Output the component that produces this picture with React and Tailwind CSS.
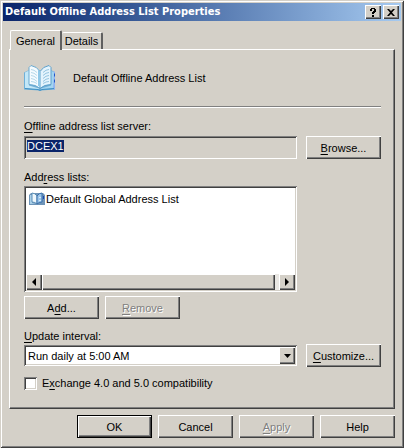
import React, { useEffect, useRef, useState } from 'react';
import clsx from 'clsx';

const RAISED =
  'bg-[#d4d0c8] shadow-[inset_1px_1px_#ffffff,inset_-1px_-1px_#404040,inset_-2px_-2px_#808080]';
const SUNKEN =
  'shadow-[inset_1px_1px_#808080,inset_-1px_-1px_#ffffff,inset_2px_2px_#404040,inset_-2px_-2px_#d4d0c8]';

function Key({ children }) {
  return <span className="underline underline-offset-2">{children}</span>;
}

function PushButton({ children, isDefault, disabled, onClick }) {
  return (
    <button
      type="button"
      disabled={disabled}
      onClick={onClick}
      className={clsx(
        'h-[23px] w-[75px] shrink-0 text-center',
        isDefault
          ? 'bg-[#d4d0c8] shadow-[inset_0_0_0_1px_#000000,inset_2px_2px_#ffffff,inset_-2px_-2px_#404040,inset_-3px_-3px_#808080]'
          : RAISED,
        disabled && 'text-[#808080] [text-shadow:1px_1px_#ffffff]'
      )}
    >
      {children}
    </button>
  );
}

function BookIcon({ className }) {
  return (
    <svg viewBox="0 0 32 27" className={className} aria-hidden="true">
      <path d="M0 8 L4 6 L28 6 L31 8 V25 L17 26 H15 L0 25 Z" fill="#6fb0d8" />
      <path d="M29 7 H31 V25 H28 Z" fill="#8fb4f2" />
      <path d="M30 9 h1 v3 h-1 z M30 15 h1 v3 h-1 z" fill="#2456c8" />
      <path d="M1 8 L5 6 V21 L15 24 V25 L1 24 Z" fill="#c3e7f7" />
      <path d="M30 8 L27 6 V21 L17 24 V25 L29 24 Z" fill="#a3d5f0" />
      <path d="M5 3 L7 1 Q13 2 16 7 V24 Q12 20 5 20 Z" fill="#f4fbff" stroke="#6aa9cf" />
      <path d="M27 3 L25 1 Q19 2 16 7 V24 Q20 20 27 20 Z" fill="#e4f4fd" stroke="#5d9fca" />
      <path d="M14 5 L16 7 V23 L14 21 Z" fill="#8fc8e8" />
      <path
        d="M7 5 Q10 5 13 8 M7 8 Q10 8 13 11 M7 11 Q10 11 13 14 M7 14 Q10 14 13 17 M7 17 Q10 17 13 19"
        fill="none"
        stroke="#b4d8ea"
      />
      <path
        d="M25 5 Q22 5 19 8 M25 8 Q22 8 19 11 M25 11 Q22 11 19 14 M25 14 Q22 14 19 17 M25 17 Q22 17 19 19"
        fill="none"
        stroke="#95c4e0"
      />
      <path d="M1 24 L14 25 L16 26 L18 25 L30 24" fill="none" stroke="#3d8fc4" />
    </svg>
  );
}

function SmallBookIcon() {
  return (
    <svg viewBox="0 0 16 14" className="h-[14px] w-4 shrink-0" aria-hidden="true">
      <path d="M0 3 L2 1 H14 L16 3 V13 H0 Z" fill="#6e94b8" />
      <path d="M1 3 H3 V11 L7 12 H1 Z" fill="#a9cfe8" />
      <path d="M3 1 Q6 1 8 4 V12 Q6 10 3 10 Z" fill="#eef7fc" stroke="#5b8fb8" />
      <path d="M13 1 Q10 1 8 4 V12 Q10 10 13 10 Z" fill="#9cc5ea" stroke="#3a70aa" />
      <path d="M14 4 h1 v3 h-1 z" fill="#1c46b4" />
      <path d="M10 5 h2 v1 h-2 z M10 8 h2 v1 h-2 z" fill="#d5ebf8" />
    </svg>
  );
}

function Arrow({ points, label }) {
  return (
    <button type="button" aria-label={label} className={clsx('flex size-4 shrink-0 items-center justify-center', RAISED)}>
      <svg viewBox="0 0 8 8" className="size-2">
        <polygon points={points} fill="#000" />
      </svg>
    </button>
  );
}

function TitleBar() {
  return (
    <header className="flex h-[18px] items-center justify-between bg-linear-to-r from-[#0a246a] to-[#a6caf0] px-0.5">
      <h1 className="font-['DejaVu_Sans_Condensed','DejaVu_Sans',sans-serif] text-[11px] font-bold whitespace-nowrap text-white">
        Default Offline Address List Properties
      </h1>
      <div className="flex gap-0.5">
        <button type="button" aria-label="Context help" className={clsx('flex h-[14px] w-4 items-center justify-center', RAISED)}>
          <svg viewBox="0 0 8 9" className="h-[9px] w-2">
            <path d="M1 1h1V0h4v1h1v3H6v1H5v1H3V4h1V3h1V1H3v2H1z M3 7h2v2H3z" fill="#000" />
          </svg>
        </button>
        <button type="button" aria-label="Close" className={clsx('flex h-[14px] w-4 items-center justify-center', RAISED)}>
          <svg viewBox="0 0 8 7" className="h-[7px] w-2">
            <path d="M0 0h2l2 2 2-2h2L5 3.5 8 7H6L4 5 2 7H0l3-3.5z" fill="#000" />
          </svg>
        </button>
      </div>
    </header>
  );
}

function GeneralPage() {
  const serverRef = useRef(null);
  const [interval, setInterval] = useState('daily5');
  const [compat, setCompat] = useState(false);

  useEffect(() => {
    serverRef.current.focus();
    serverRef.current.select();
  }, []);

  return (
    <div className="flex flex-col pt-3.5 pr-[13px] pb-[17px] pl-3.5">
      <div className="flex items-center gap-[17px]">
        <BookIcon className="h-7 w-8 shrink-0" />
        <p>Default Offline Address List</p>
      </div>
      <hr className="mt-3.5 h-0.5 border-0 border-t border-[#808080] bg-white" />

      <label htmlFor="server" className="mt-2.5">
        <Key>O</Key>ffline address list server:
      </label>
      <div className="mt-0.5 flex gap-[9px]">
        <input
          id="server"
          ref={serverRef}
          readOnly
          defaultValue="DCEX1"
          className={clsx(
            'h-[23px] min-w-0 flex-1 bg-[#d4d0c8] px-[3px] pb-1 outline-none selection:bg-[#0a246a] selection:text-white',
            SUNKEN
          )}
        />
        <PushButton>
          <Key>B</Key>rowse...
        </PushButton>
      </div>

      <div id="lists-label" className="mt-2.5">
        Add<Key>r</Key>ess lists:
      </div>
      <div className="mt-px flex gap-[9px]">
        <div className={clsx('flex h-[106px] min-w-0 flex-1 flex-col bg-white p-0.5', SUNKEN)}>
          <ul aria-labelledby="lists-label" className="flex-1 pt-[3px] pl-[3px]">
            <li className="flex items-center gap-px">
              <SmallBookIcon />
              Default Global Address List
            </li>
          </ul>
          <div className="flex bg-[#e9e7e3]">
            <Arrow label="Scroll left" points="2,4 6,0 6,8" />
            <div className={clsx('mr-1 flex-1', RAISED)} />
            <Arrow label="Scroll right" points="6,4 2,0 2,8" />
          </div>
        </div>
        <div className="w-[75px] shrink-0" />
      </div>

      <div className="mt-1 flex gap-1.5">
        <PushButton>
          A<Key>d</Key>d...
        </PushButton>
        <PushButton disabled>
          <Key>R</Key>emove
        </PushButton>
      </div>

      <label htmlFor="interval" className="mt-[9px]">
        <Key>U</Key>pdate interval:
      </label>
      <div className="flex items-center gap-[9px]">
        <div className="relative min-w-0 flex-1">
          <select
            id="interval"
            value={interval}
            onChange={(e) => setInterval(e.target.value)}
            className={clsx('block h-[21px] w-full appearance-none bg-white pl-1 outline-none', SUNKEN)}
          >
            <option value="daily5">Run daily at 5:00 AM</option>
          </select>
          <span
            className={clsx(
              'pointer-events-none absolute inset-y-0.5 right-0.5 flex w-4 items-center justify-center',
              RAISED
            )}
          >
            <svg viewBox="0 0 7 4" className="h-1 w-[7px]">
              <polygon points="0,0 7,0 3.5,4" fill="#000" />
            </svg>
          </span>
        </div>
        <PushButton>
          <Key>C</Key>ustomize...
        </PushButton>
      </div>

      <label className="mt-2 flex items-center gap-[5px]">
        <input
          type="checkbox"
          checked={compat}
          onChange={(e) => setCompat(e.target.checked)}
          className={clsx('size-[13px] appearance-none bg-white checked:bg-black', SUNKEN)}
        />
        <span>
          E<Key>x</Key>change 4.0 and 5.0 compatibility
        </span>
      </label>
    </div>
  );
}

export default function App() {
  return (
    <div className="bg-[#d4d0c8] p-[3px] pb-2.5 font-['Liberation_Sans',Arial,sans-serif] text-[11px] leading-4 text-black shadow-[inset_1px_1px_#d4d0c8,inset_-1px_-1px_#404040,inset_2px_2px_#ffffff,inset_-2px_-2px_#808080]">
      <TitleBar />

      <main className="px-1.5 pt-[9px]">
        <div role="tablist" className="flex items-end pl-px">
          <button
            type="button"
            role="tab"
            aria-selected="true"
            className="relative -mb-px h-5 w-[52px] rounded-t-xs border-t border-r-2 border-l border-t-white border-r-[#606060] border-l-white bg-[#d4d0c8] text-center"
          >
            General
          </button>
          <button
            type="button"
            role="tab"
            aria-selected="false"
            className="h-[17px] w-[41px] rounded-t-xs border-t border-r-2 border-t-white border-r-[#606060] text-center"
          >
            Details
          </button>
        </div>
        <div
          role="tabpanel"
          className="border border-t-white border-r-[#404040] border-b-[#404040] border-l-white shadow-[inset_-1px_-1px_#808080]"
        >
          <GeneralPage />
        </div>

        <footer className="mt-1.5 flex justify-end gap-1.5">
          <PushButton isDefault>OK</PushButton>
          <PushButton>Cancel</PushButton>
          <PushButton disabled>
            <Key>A</Key>pply
          </PushButton>
          <PushButton>Help</PushButton>
        </footer>
      </main>
    </div>
  );
}
